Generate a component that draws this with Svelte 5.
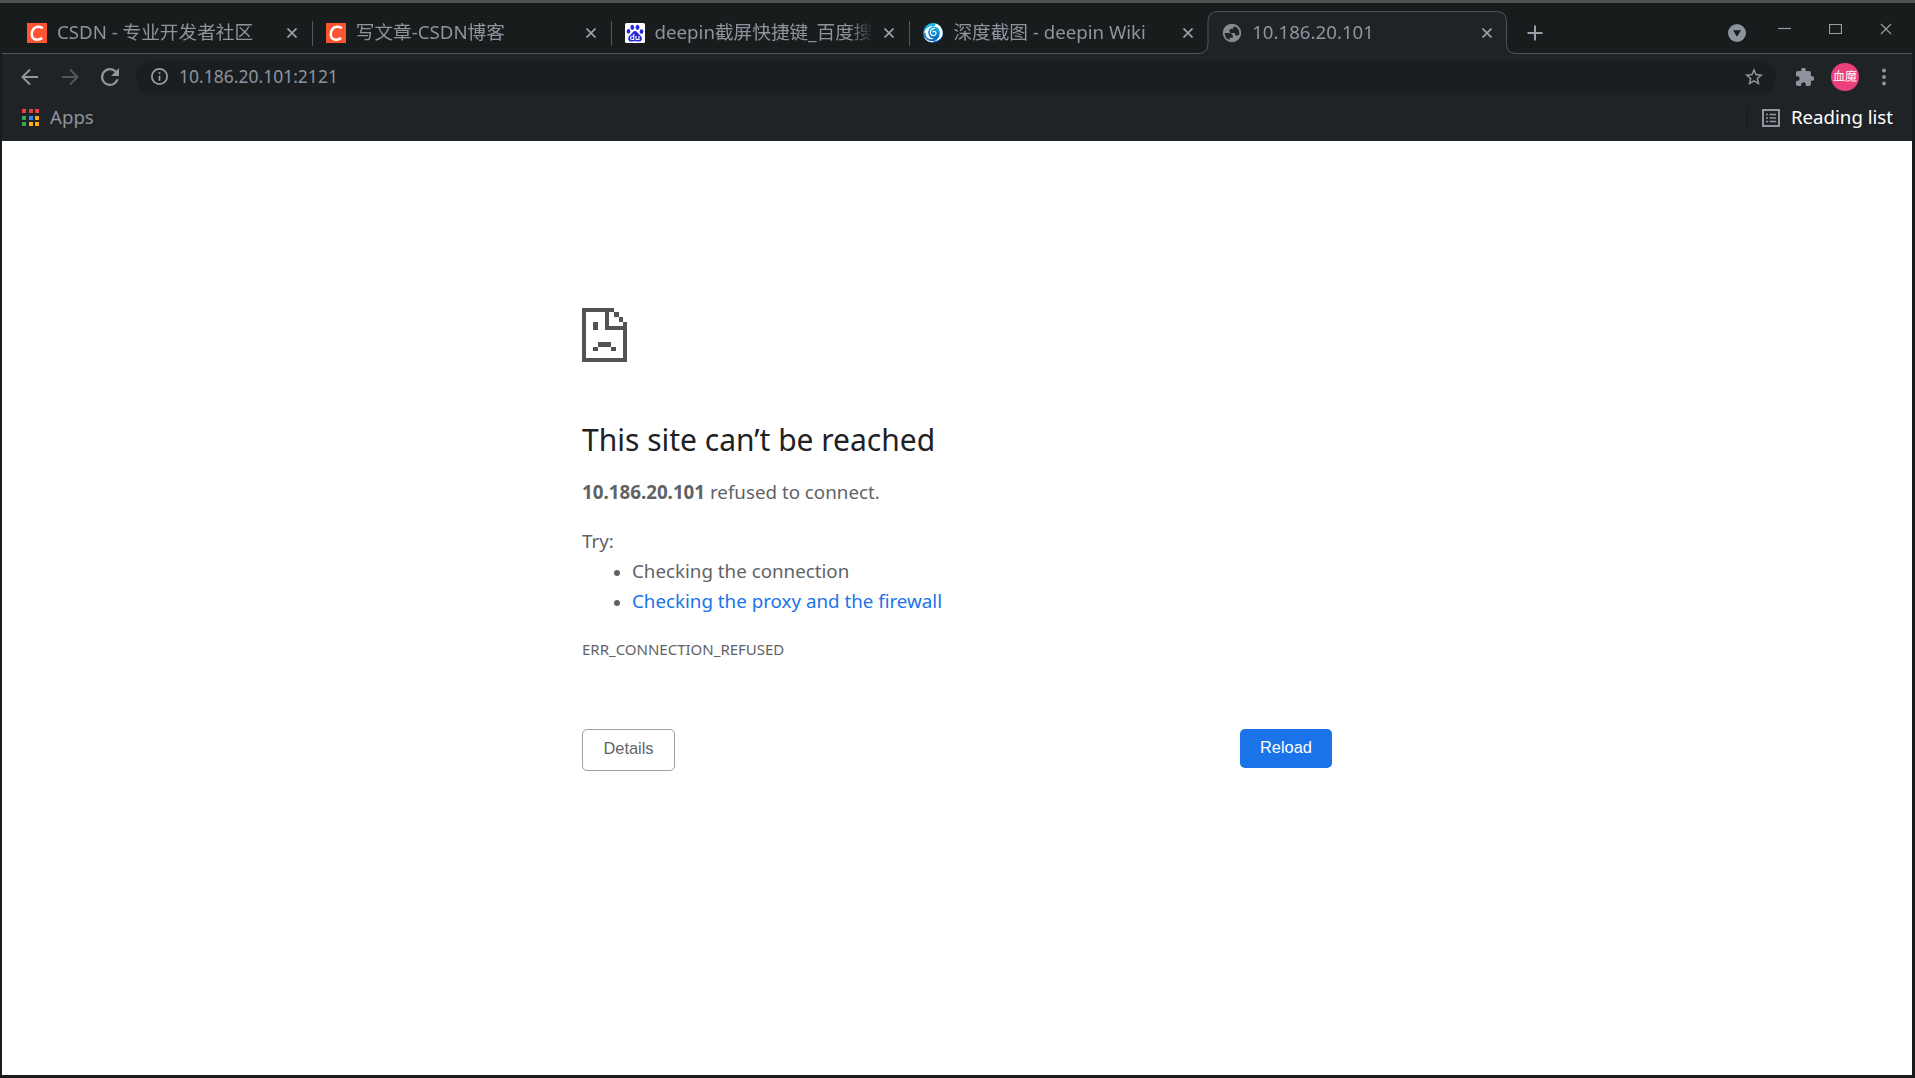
<script>
    const tabs = [
        { title: "CSDN - 专业开发者社区", icon: "csdn" },
        { title: "写文章-CSDN博客", icon: "csdn" },
        { title: "deepin截屏快捷键_百度搜", icon: "baidu" },
        { title: "深度截图 - deepin Wiki", icon: "deepin" },
        { title: "10.186.20.101", icon: "globe" },
    ];
    const host = "10.186.20.101";
    const appColors = [
        "#ea4335", "#ea4335", "#ea4335",
        "#34a853", "#2f8df5", "#fbad17",
        "#34a853", "#fbad17", "#fbad17",
    ];
    let active = $state(4);
</script>

<div class="window">
    <header class="strip">
        <div class="tabs">
            {#each tabs as tab, i}
                <div class="tab" class:active={active === i} class:line={i < 3}>
                    {#if active === i}
                        <svg class="shape" width="321" height="43" viewBox="0 0 321 43">
                            <path d="M0 42.5C7 42.5 11 39 11 32V10.500Q11 .5 21 .5H299.500Q309.500 .5 309.500 10.500V32C309.500 39 313.500 42.500 320.500 42.500V43H0z" fill="#202326" />
                            <path d="M0 42.500H1Q11 42.500 11 32.500V10.500Q11 .5 21 .5H299.500Q309.500 .5 309.500 10.500V32.500Q309.500 42.500 319.500 42.500H321" fill="none" stroke="#515456" />
                        </svg>
                    {/if}
                    <span class="favicon">
                        {#if tab.icon === "csdn"}
                            <svg width="20" height="20" viewBox="0 0 20 20">
                                <path d="M0 0h20v20H0z" fill="#fc5531" />
                                <path d="M15.800 5.200C13 3.200 8.500 3.200 6.300 6.300C4 9.400 4.200 14 6.800 15.800C9 17.200 12.500 16.800 15.200 15.200" fill="none" stroke="#fff" stroke-width="2.500" />
                            </svg>
                        {:else if tab.icon === "baidu"}
                            <svg width="20" height="20" viewBox="0 0 20 20">
                                <rect width="20" height="20" rx="1.500" fill="#fff" />
                                <g fill="#2529d8">
                                    <ellipse cx="7.300" cy="4.300" rx="1.900" ry="2.600" />
                                    <ellipse cx="12.500" cy="4.300" rx="1.900" ry="2.600" />
                                    <ellipse cx="3.500" cy="8.300" rx="1.800" ry="2.400" />
                                    <ellipse cx="16.500" cy="8.600" rx="1.800" ry="2.400" />
                                    <path d="M10 8C8 8 7.500 10 5.800 11.500C4 13 3 14 3.200 16C3.500 18.500 5.500 18.800 7.500 18.400C9 18.100 11 18.100 12.500 18.400C14.500 18.800 16.700 18.400 16.900 16C17 14 16 13 14.300 11.500C12.500 10 12 8 10 8z" />
                                </g>
                                <path d="M8.800 11v5.500H7.200a1.500 1.500 0 1 1 0-3.200h1.600M11 13v2.500q0 1 1 1h2V13" fill="none" stroke="#fff" stroke-width="1.100" />
                            </svg>
                        {:else if tab.icon === "deepin"}
                            <svg width="20" height="20" viewBox="0 0 20 20">
                                <defs>
                                    <linearGradient id="sea" x1="0" y1="0" x2="0" y2="1">
                                        <stop offset="0" stop-color="#18c4ee" />
                                        <stop offset="1" stop-color="#0756b8" />
                                    </linearGradient>
                                </defs>
                                <circle cx="10" cy="10" r="10" fill="url(#sea)" />
                                <g fill="#fff">
                                    <path d="M1.500 8.500C3 4.500 7.500 2.500 11 3C6.500 4 4.500 7.500 5.500 11C6 13.500 8 15.500 11 15.700C6 17.500 2 14.500 2.600 9.500C2.200 9.500 1.700 9.800 1.200 10.800z" />
                                    <path d="M12 .4C17.500 1.500 20.500 7 19.500 12C18.500 15.500 15 18 11.500 18C16 16 17.500 12 16.500 8C15.800 5 13.500 3.500 10.500 3.700C12.500 3 13 2 12 .4z" />
                                    <path d="M.7 13C3 17 7 18.800 12 18.200C8 20.500 2.500 18.700 .7 13z" />
                                </g>
                                <path d="M12 5.500C8.500 5 6.800 8 7.500 10.500C8.500 13.500 12.500 13.300 13 10.500C13.300 8.500 10.500 7.500 9.700 9.300" fill="none" stroke="#fff" stroke-width="1.200" />
                            </svg>
                        {:else}
                            <svg width="22" height="22" viewBox="0 0 24 24" fill="#898a8c">
                                <path d="M12 2C6.480 2 2 6.480 2 12s4.480 10 10 10 10-4.480 10-10S17.520 2 12 2zM4 12h4.400c3.407.022 4.922 1.730 4.543 5.127H9.488v2.470A8.004 8.004 0 0 1 4 12zm16 0c0 .700-.090 1.380-.260 2.020C19.100 14.660 18.300 15 17.400 15c-1.500 0-2.400-1-2.400-3h-3.500c-1.500 0-2.300-.800-2.300-2.300S10 7.400 11.500 7.400h1.700c0-1.700.700-2.500 2-2.500A8 8 0 0 1 20 12z" />
                            </svg>
                        {/if}
                    </span>
                    <span class="title">{tab.title}</span>
                    <button class="close" aria-label="Close tab">
                        <svg width="10" height="10" viewBox="0 0 10 10"><path d="M.5 .5l9 9M9.500 .5l-9 9" /></svg>
                    </button>
                </div>
            {/each}
            <button class="new" aria-label="New tab">
                <svg width="16" height="16" viewBox="0 0 16 16"><path d="M8 .5v15M.5 8h15" /></svg>
            </button>
        </div>
        <div class="controls">
            <svg class="search" width="18" height="18" viewBox="0 0 18 18">
                <circle cx="9" cy="9" r="9" fill="#8d949e" />
                <path d="M5 6.300h8L9 12.800z" fill="#191c1d" />
            </svg>
            <svg width="13" height="12" viewBox="0 0 13 12"><path d="M0 5.500h13" /></svg>
            <svg width="13" height="12" viewBox="0 0 13 12"><path d="M.5 1.500h12v9H.5z" /></svg>
            <svg width="12" height="12" viewBox="0 0 12 12"><path d="M1 1l10 10M11 1L1 11" /></svg>
        </div>
    </header>

    <div class="toolbar">
        <div class="nav">
            <svg width="18" height="18" viewBox="0 0 18 18"><path d="M17 9H2M9 1.500L1.500 9L9 16.500" fill="none" stroke="#9097a0" stroke-width="2" /></svg>
            <svg width="18" height="18" viewBox="0 0 18 18"><path d="M1 9h15M9 1.500L16.500 9L9 16.500" fill="none" stroke="#54585c" stroke-width="2" /></svg>
            <svg width="18" height="18" viewBox="4 4 16 16"><path d="M17.650 6.350A7.958 7.958 0 0 0 12 4a8 8 0 1 0 7.730 10h-2.080A6 6 0 1 1 12 6c1.660 0 3.140.690 4.220 1.780L13 11h7V4z" fill="#9097a0" /></svg>
        </div>
        <div class="omnibox">
            <svg width="17" height="17" viewBox="2 2 20 20"><path d="M11 7h2v2h-2zm0 4h2v6h-2zm1-9a10 10 0 1 0 0 20 10 10 0 0 0 0-20zm0 18a8 8 0 1 1 0-16 8 8 0 0 1 0 16z" fill="#9a9fa6" /></svg>
            <span>{host}:2121</span>
            <svg class="star" width="18" height="18" viewBox="2 2 20 20"><path d="M22 9.240l-7.190-.620L12 2 9.190 8.630 2 9.240l5.460 4.730L5.820 21 12 17.270 18.180 21l-1.630-7.030zM12 15.400l-3.760 2.270 1-4.280-3.320-2.880 4.380-.380L12 6.100l1.710 4.040 4.380.380-3.320 2.880 1 4.280z" fill="#9097a0" /></svg>
        </div>
        <svg class="puzzle" width="18" height="18" viewBox="2 1.500 20.500 20.500"><path d="M20.500 11H19V7c0-1.100-.900-2-2-2h-4V3.500a2.500 2.500 0 0 0-5 0V5H4c-1.100 0-2 .900-2 2v3.800h1.500a2.700 2.700 0 0 1 0 5.400H2V20c0 1.100.900 2 2 2h3.800v-1.500a2.700 2.700 0 0 1 5.400 0V22H17c1.100 0 2-.900 2-2v-4h1.500a2.500 2.500 0 0 0 0-5z" fill="#8d949e" /></svg>
        <span class="avatar">血魔</span>
        <svg class="more" width="4" height="18" viewBox="0 0 4 18" fill="#9097a0"><circle cx="2" cy="2.500" r="1.900" /><circle cx="2" cy="9" r="1.900" /><circle cx="2" cy="15.500" r="1.900" /></svg>
    </div>

    <div class="bookmarks">
        <svg width="17" height="17" viewBox="0 0 17 17" shape-rendering="crispEdges">
            {#each appColors as color, i}
                <rect x={(i % 3) * 6.5} y={Math.floor(i / 3) * 6.5} width="4" height="4" fill={color} />
            {/each}
        </svg>
        <span>Apps</span>
        <div class="reading">
            <svg width="18" height="18" viewBox="0 0 18 18" fill="none" stroke="#9097a0">
                <path d="M1 1h16v16H1z" stroke-width="2" />
                <path d="M4 5.500h2M4 9h2M4 12.500h2M7.500 5.500H14M7.500 9H14M7.500 12.500H14" stroke-width="1.500" />
            </svg>
            <span>Reading list</span>
        </div>
    </div>

    <main>
        <svg class="sad" width="45" height="54" viewBox="0 0 45 55" preserveAspectRatio="none" fill="#535353" shape-rendering="crispEdges">
            <path d="M0 0h32v4H4v47h37V22H23V4h4v14h14v-4h4v41H0z" />
            <path d="M32 4h5v5h-5zM37 9h4v5h-4zM11 14h5v8h-5zM16 35h13v5H16zM11 40h5v4h-5zM29 40h5v4h-5z" />
        </svg>
        <h1>This site can’t be reached</h1>
        <p><strong>{host}</strong> refused to connect.</p>
        <div class="suggestions">
            <p>Try:</p>
            <ul>
                <li>Checking the connection</li>
                <li><a href="#buttons">Checking the proxy and the firewall</a></li>
            </ul>
        </div>
        <div class="code">ERR_CONNECTION_REFUSED</div>
        <div id="buttons">
            <button class="details">Details</button>
            <button class="reload">Reload</button>
        </div>
    </main>
</div>

<style>
    :global(body) {
        margin: 0;
        background: #191b1c;
    }
    .window {
        box-sizing: border-box;
        width: 1915px;
        height: 1078px;
        padding: 0 3px 3px 2px;
        border-top: 3px solid #515253;
        background: #191b1c;
        font-family: "Noto Sans", "Noto Sans CJK SC", sans-serif;
        font-size: 18.67px;
        color: #8d949e;
        display: flex;
        flex-direction: column;
        overflow: hidden;
    }
    button {
        padding: 0;
        border: none;
        background: none;
        cursor: pointer;
    }
    svg {
        display: block;
        flex: none;
    }
    .strip {
        height: 50px;
        flex: none;
        border-bottom: 1px solid #515456;
        background: #191c1d;
        display: flex;
        justify-content: space-between;
    }
    .tabs {
        display: flex;
        align-items: center;
        padding: 10px 0 0 11px;
    }
    .tab {
        position: relative;
        box-sizing: border-box;
        width: 298.8px;
        height: 40px;
        padding: 0 15px 0 14px;
        display: flex;
        align-items: center;
    }
    .tab.line::after {
        content: "";
        position: absolute;
        right: -1px;
        top: 8px;
        width: 1px;
        height: 25px;
        background: #54585d;
    }
    .shape {
        position: absolute;
        left: -11px;
        top: -2px;
    }
    .favicon {
        position: relative;
        width: 20px;
        height: 20px;
        margin-right: 10px;
        display: flex;
        align-items: center;
        justify-content: center;
    }
    .title {
        position: relative;
        width: 219px;
        padding-bottom: 2px;
        line-height: 28px;
        white-space: nowrap;
        mask-image: linear-gradient(to right, #000 195px, transparent 218px);
    }
    .close {
        position: relative;
        margin-left: auto;
    }
    .close svg {
        stroke: #9aa1ab;
        stroke-width: 1.7;
    }
    .new {
        margin-left: 20px;
    }
    .new svg {
        stroke: #9aa1ab;
        stroke-width: 2;
    }
    .controls {
        display: flex;
        align-items: center;
        gap: 38px;
        padding: 0 20px 0 0;
        height: 52px;
    }
    .controls svg {
        fill: none;
        stroke: #9b9d9f;
        stroke-width: 1.2;
    }
    .controls .search {
        stroke: none;
        margin: 8px -6px 0 0;
    }
    .toolbar {
        height: 46px;
        flex: none;
        background: #202326;
        display: flex;
        align-items: center;
    }
    .nav {
        display: flex;
        gap: 22px;
        padding: 0 0 1px 19px;
    }
    .omnibox {
        box-sizing: border-box;
        width: 1640px;
        height: 35px;
        margin-left: 17px;
        padding: 0 13px 1px 15px;
        border-radius: 18px;
        background: #1b1e20;
        font-size: 17.5px;
        display: flex;
        align-items: center;
        gap: 11px;
    }
    .omnibox span {
        padding-bottom: 1px;
    }
    .star {
        margin-left: auto;
    }
    .puzzle {
        margin: 0 0 1px 20px;
    }
    .avatar {
        width: 28px;
        height: 28px;
        margin-left: 17px;
        border-radius: 50%;
        background: #ec407a;
        color: #fff;
        font-size: 12px;
        line-height: 28px;
        text-align: center;
    }
    .more {
        margin: 0 0 1px 23px;
    }
    .bookmarks {
        height: 41px;
        padding: 0 19px 6px 20px;
        flex: none;
        background: #202326;
        display: flex;
        align-items: center;
        box-sizing: border-box;
    }
    .bookmarks > span {
        margin-left: 11px;
    }
    .bookmarks span {
        padding-bottom: 2px;
    }
    .reading {
        margin-left: auto;
        height: 20px;
        padding-left: 14px;
        border-left: 1px solid #15181a;
        color: #fff;
        display: flex;
        align-items: center;
        gap: 11px;
    }
    main {
        flex: 1;
        padding: 167px 580px 0;
        background: #fff;
        color: #5f6368;
        font-size: 18.75px;
        line-height: 30px;
    }
    h1 {
        margin: 59px 0 18px;
        color: #202124;
        font-size: 30px;
        font-weight: 400;
        line-height: 38px;
    }
    p {
        margin: 0;
    }
    .suggestions {
        margin-top: 19px;
    }
    ul {
        margin: 0;
        padding-left: 50px;
    }
    li::marker {
        font-size: 16px;
    }
    a {
        color: #1a73e8;
        text-decoration: none;
    }
    .code {
        margin-top: 21px;
        font-size: 15px;
        line-height: 24px;
    }
    #buttons {
        display: flex;
        justify-content: space-between;
        align-items: flex-start;
        margin-top: 68px;
    }
    #buttons button {
        box-sizing: border-box;
        border-radius: 5px;
        font-family: "Liberation Sans", Arial, sans-serif;
        font-size: 16.4px;
    }
    #buttons .details {
        width: 93px;
        height: 42px;
        padding-bottom: 4px;
        border: 1px solid #9aa0a6;
        color: #5f6368;
    }
    #buttons .reload {
        width: 92px;
        height: 39px;
        padding-bottom: 2px;
        background: #1a73e8;
        color: #fff;
    }
</style>
